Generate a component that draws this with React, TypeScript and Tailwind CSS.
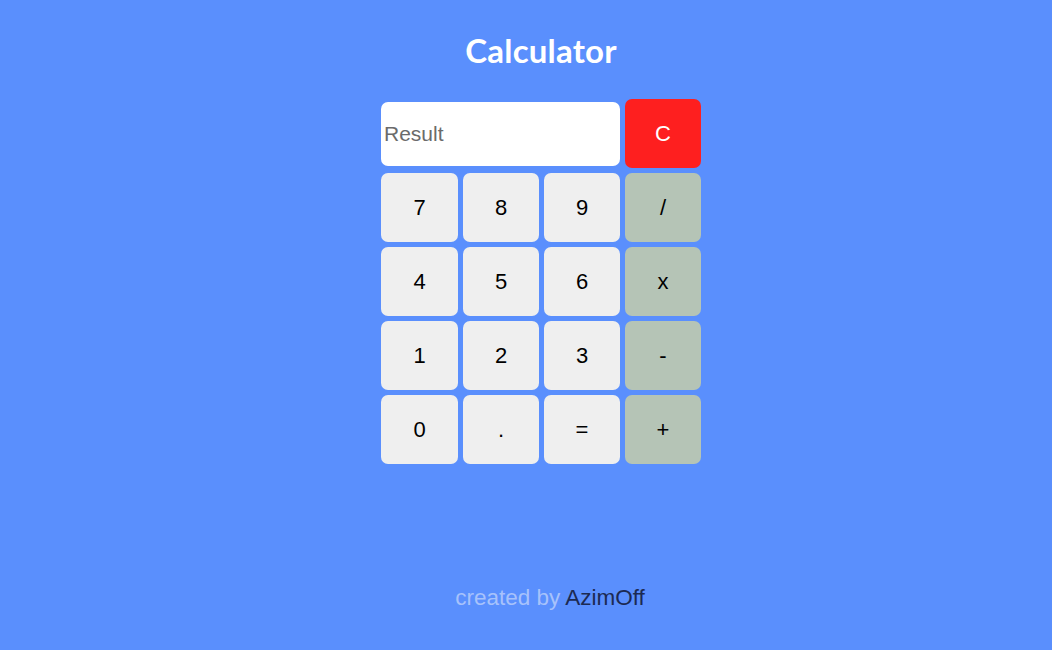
export default function App() {
  const keys = [
    ["7", "8", "9", "/"],
    ["4", "5", "6", "x"],
    ["1", "2", "3", "-"],
    ["0", ".", "=", "+"],
  ]

  return (
    <div className="min-h-[650px] w-full bg-[#5a8ffd] flex flex-col items-center pl-[30px] font-['Liberation_Sans',Arial,sans-serif]">
      <h1 className="mt-[31px] text-[33px] leading-[38px] font-bold text-white font-['Lato','Open_Sans',sans-serif] tracking-[0.2px]">
        Calculator
      </h1>

      <div className="mt-[30px] grid grid-cols-[77px_76px_76px_76px] gap-x-[5px] gap-y-[5px]">
        <div className="col-span-3 flex items-center">
          <input
            readOnly
            placeholder="Result"
            className="w-full h-[64px] bg-white rounded-[7px] px-[3px] text-[21px] text-[#333] placeholder:text-[#6b6b6b] outline-none"
          />
        </div>
        <button className="h-[69px] rounded-[7px] bg-[#fe1f1f] text-white text-[22px]">C</button>

        {keys.map((row) =>
          row.map((k, i) => (
            <button
              key={k}
              className={`h-[69px] rounded-[7px] text-[22px] text-black ${
                i === 3 ? "bg-[#b5c4b6]" : "bg-[#efefef]"
              }`}
            >
              {k}
            </button>
          ))
        )}
      </div>

      <p className="mt-[117px] ml-[18px] text-[22.5px] text-[#a7c2fb]">
        created by <span className="text-[#1c2a52]">AzimOff</span>
      </p>
    </div>
  )
}
